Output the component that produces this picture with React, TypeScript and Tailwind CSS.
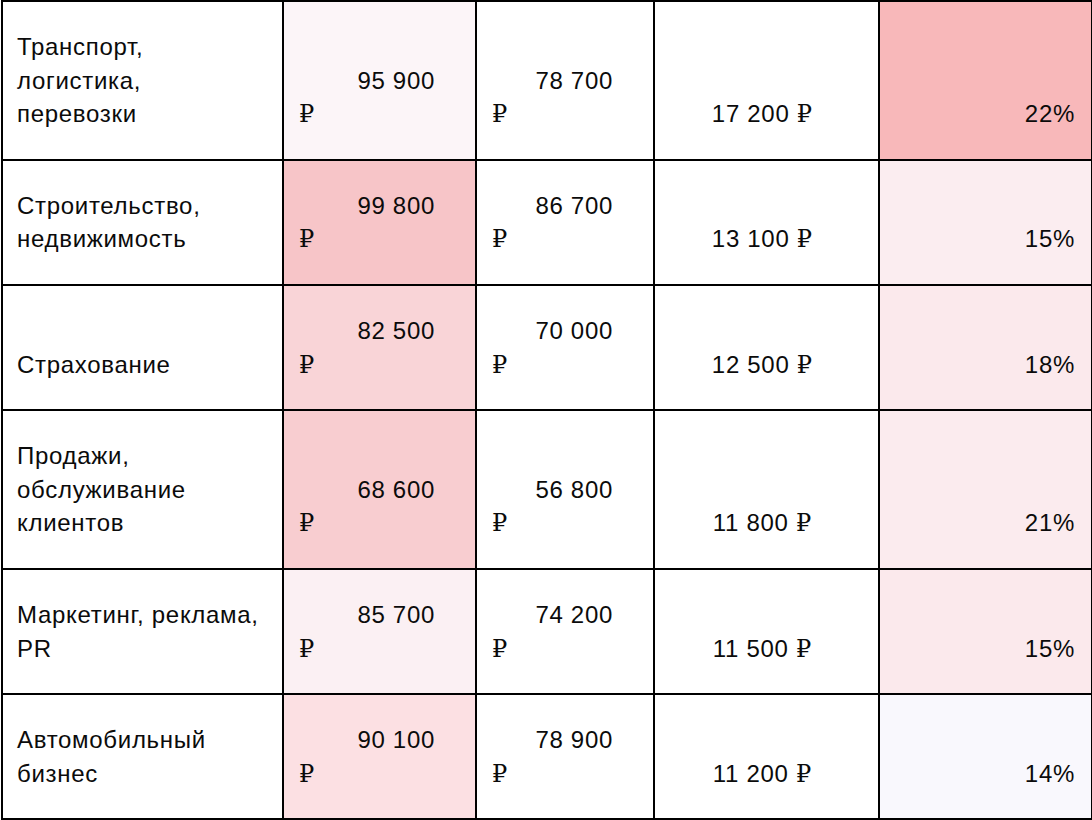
import React from "react";

// --- Types ---
interface SalaryRow {
  label: string[];
  before: string;
  after: string;
  diff: string;
  percent: string;
  beforeBg: string;
  percentBg: string;
}

// --- Data ---
const rows: SalaryRow[] = [
  {
    label: ["Транспорт,", "логистика,", "перевозки"],
    before: "95 900",
    after: "78 700",
    diff: "17 200",
    percent: "22%",
    beforeBg: "bg-[#fcf5f8]",
    percentBg: "bg-[#f8b8ba]",
  },
  {
    label: ["Строительство,", "недвижимость"],
    before: "99 800",
    after: "86 700",
    diff: "13 100",
    percent: "15%",
    beforeBg: "bg-[#f7c5c8]",
    percentBg: "bg-[#fbedf0]",
  },
  {
    label: ["Страхование"],
    before: "82 500",
    after: "70 000",
    diff: "12 500",
    percent: "18%",
    beforeBg: "bg-[#f9d4d7]",
    percentBg: "bg-[#fbe9ec]",
  },
  {
    label: ["Продажи,", "обслуживание", "клиентов"],
    before: "68 600",
    after: "56 800",
    diff: "11 800",
    percent: "21%",
    beforeBg: "bg-[#f8cdd0]",
    percentBg: "bg-[#fbebee]",
  },
  {
    label: ["Маркетинг, реклама,", "PR"],
    before: "85 700",
    after: "74 200",
    diff: "11 500",
    percent: "15%",
    beforeBg: "bg-[#fbf0f3]",
    percentBg: "bg-[#fbe9ec]",
  },
  {
    label: ["Автомобильный", "бизнес"],
    before: "90 100",
    after: "78 900",
    diff: "11 200",
    percent: "14%",
    beforeBg: "bg-[#fce0e3]",
    percentBg: "bg-[#f9f8fd]",
  },
];

const cell = "border-2 border-black align-bottom py-[28px] px-[14px]";

// thin ruble sign, like the system fallback glyph in the original
function Rub() {
  return (
    <span className="font-['Liberation_Serif','DejaVu_Serif',serif] tracking-normal leading-none">₽</span>
  );
}

function Money({ value }: { value: string }) {
  return (
    <div className="flex flex-col">
      <div className="self-end mr-[26px] h-[33.6px]">{value}</div>
      <div className="pl-px h-[33.6px]">
        <Rub />
      </div>
    </div>
  );
}

export default function App() {
  return (
    <div className="w-[1092px] h-[820px] bg-white overflow-hidden pl-px">
      <table
        className="table-fixed border-collapse w-[1090px] text-[24px] leading-[1.4] tracking-[0.7px] text-[#0b0b0b]"
        style={{ fontFamily: '"Liberation Sans", Arial, sans-serif' }}
      >
        <colgroup>
          <col className="w-[281px]" />
          <col className="w-[193px]" />
          <col className="w-[178px]" />
          <col className="w-[225px]" />
          <col className="w-[213px]" />
        </colgroup>
        <tbody>
          {rows.map((row) => (
            <tr key={row.before}>
              <td className={cell}>
                {row.label.map((line, i) => (
                  <div key={i}>{line}</div>
                ))}
              </td>
              <td className={`${cell} ${row.beforeBg}`}>
                <Money value={row.before} />
              </td>
              <td className={cell}>
                <Money value={row.after} />
              </td>
              <td className={`${cell} text-center`}>
                <div className="pr-[9px] h-[33.6px]">
                  {row.diff} <Rub />
                </div>
              </td>
              <td className={`${cell} text-right pr-[16px] ${row.percentBg}`}>{row.percent}</td>
            </tr>
          ))}
        </tbody>
      </table>
    </div>
  );
}
